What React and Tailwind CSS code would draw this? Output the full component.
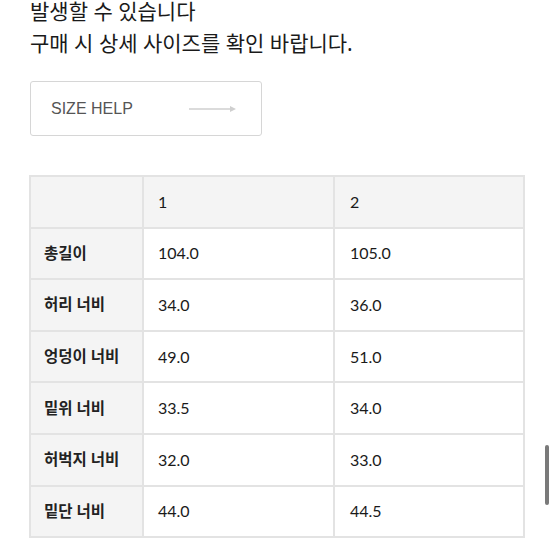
import React from 'react'

const rows = [
    ['총길이', '104.0', '105.0'],
    ['허리 너비', '34.0', '36.0'],
    ['엉덩이 너비', '49.0', '51.0'],
    ['밑위 너비', '33.5', '34.0'],
    ['허벅지 너비', '32.0', '33.0'],
    ['밑단 너비', '44.0', '44.5'],
]

const App = () => {
    return (
        <div className="relative w-[555px] h-[555px] overflow-hidden bg-white font-['Noto_Sans','Noto_Sans_CJK_KR',sans-serif] text-[#1a1a1a]">
            {/* 안내 문구 */}
            <div className="pl-[30px] -mt-[5px] text-[21px] leading-[32px]">
                <p>발생할 수 있습니다</p>
                <p>구매 시 상세 사이즈를 확인 바랍니다.</p>
            </div>

            <div className="pl-[30px] pt-[22px]">
                <button className="flex items-center justify-between w-[232px] h-[55px] border border-[#d6d6d6] rounded-[3px] pl-[20px] pr-[24px]">
                    <span className="text-[16px] text-[#555] font-['Liberation_Sans',sans-serif]">SIZE HELP</span>
                    <svg width="48" height="8" viewBox="0 0 48 8">
                        <line x1="0" y1="4" x2="42" y2="4" stroke="#cfcfcf" strokeWidth="1.3" />
                        <path d="M41 1 L47 4 L41 7 Z" fill="#cfcfcf" />
                    </svg>
                </button>
            </div>

            <div className="pl-[29px] pt-[39px]">
                <table className="border-collapse w-[496px] text-[16px]">
                    <thead>
                        <tr className="h-[51.6px] bg-[#f4f4f4]">
                            <th className="w-[113px] border-2 border-[#e3e3e3]"></th>
                            <th className="w-[191px] border-2 border-[#e3e3e3] text-left font-normal pl-[14px] font-['Lato',sans-serif]">1</th>
                            <th className="border-2 border-[#e3e3e3] text-left font-normal pl-[15px] font-['Lato',sans-serif]">2</th>
                        </tr>
                    </thead>
                    <tbody>
                        {rows.map((r) => (
                            <tr key={r[0]} className="h-[51.6px]">
                                <td className="bg-[#f4f4f4] border-2 border-[#e3e3e3] pl-[13px] font-bold text-[15.5px] text-[#222]">{r[0]}</td>
                                <td className="border-2 border-[#e3e3e3] pl-[14px] font-['Lato',sans-serif]">{r[1]}</td>
                                <td className="border-2 border-[#e3e3e3] pl-[15px] font-['Lato',sans-serif]">{r[2]}</td>
                            </tr>
                        ))}
                    </tbody>
                </table>
            </div>

            {/* 스크롤바 */}
            <div className="absolute left-[545px] top-[445px] w-[4px] h-[60px] rounded-full bg-[#7a7a7a]"></div>
        </div>
    )
}

export default App
